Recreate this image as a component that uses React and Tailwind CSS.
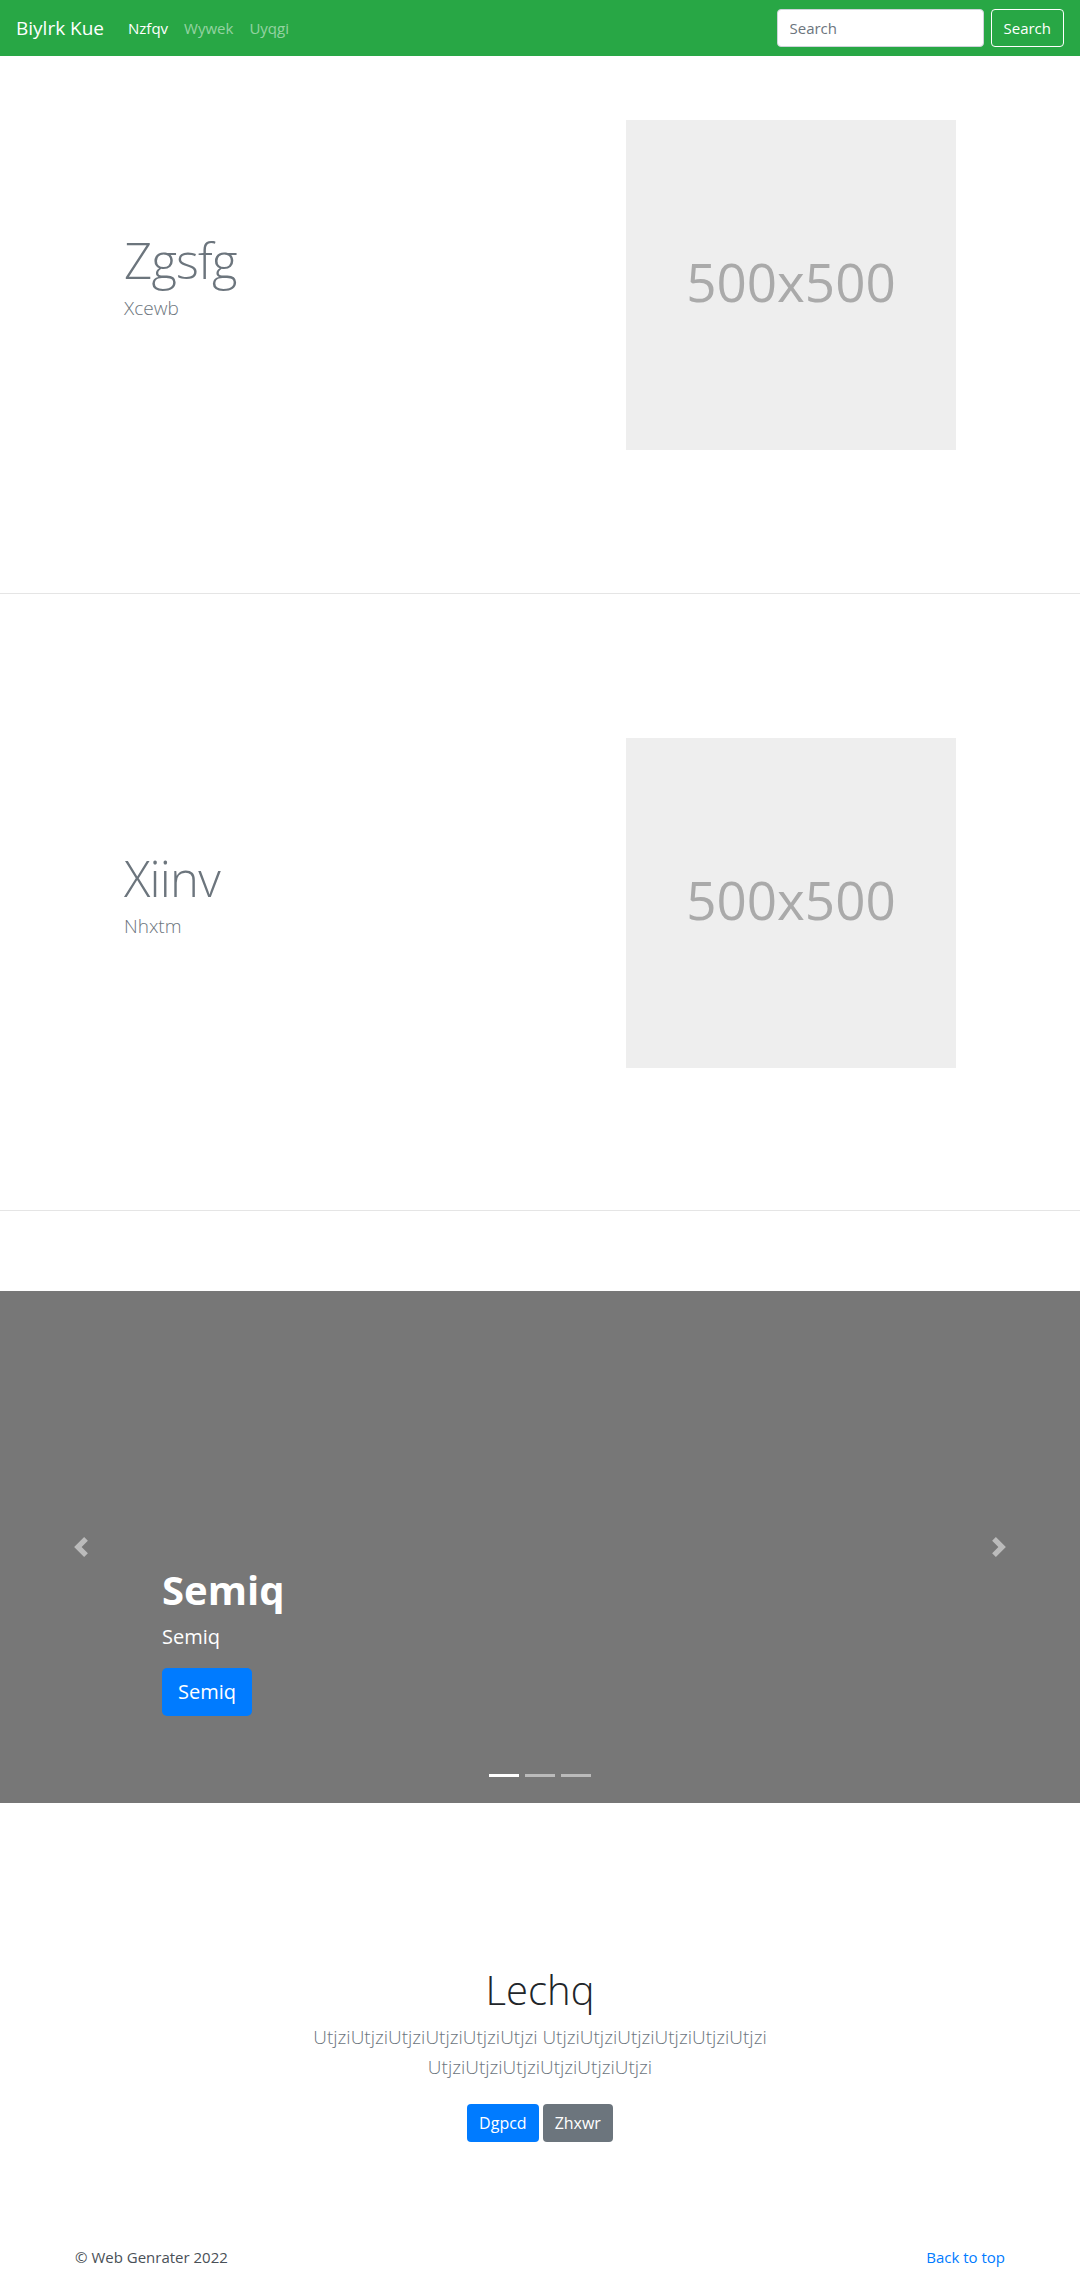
import React from "react";

const font = { fontFamily: '"Open Sans", "Liberation Sans", sans-serif' };

// 佔位圖
function Placeholder() {
  return (
    <div className="w-[330px] h-[330px] bg-[#eeeeee] flex items-center justify-center shrink-0">
      <span className="text-[53px] text-[#aaaaaa] leading-none mb-[8px]">500x500</span>
    </div>
  );
}

function Featurette({ title, sub, pt, pb }) {
  return (
    <div className={`flex items-center px-[124px] ${pt} ${pb}`}>
      <div className="flex-1 pb-[12px]">
        <h2 className="text-[49px] font-light leading-none tracking-[-0.8px] text-[#6c757d] mb-[8px]">{title}</h2>
        <p className="text-[19px] font-light leading-[30px] text-[#6c757d]">{sub}</p>
      </div>
      <Placeholder />
    </div>
  );
}

function Chevron({ flip }) {
  return (
    <svg viewBox="0 0 8 8" className={`w-5 h-5 ${flip ? "rotate-180" : ""}`} fill="#fff">
      <path d="M5.25 0l-4 4 4 4 1.5-1.5-2.5-2.5 2.5-2.5-1.5-1.5z" />
    </svg>
  );
}

export default function App() {
  return (
    <div style={font} className="bg-white text-[#212529] text-[16px]">
      {/* 導覽列 */}
      <nav className="h-[56px] bg-[#28a745] flex items-center px-4">
        <span className="text-[19px] text-white mr-4">Biylrk Kue</span>
        <div className="flex items-center text-[15px]">
          <span className="px-2 text-white">Nzfqv</span>
          <span className="px-2 text-white/50">Wywek</span>
          <span className="px-2 text-white/50">Uyqgi</span>
        </div>
        <div className="ml-auto flex items-center">
          <input
            placeholder="Search"
            className="w-[207px] h-[38px] rounded-[4px] bg-white border border-[#ced4da] px-3 text-[15px] placeholder:text-[#6c757d] mr-[7px] outline-none"
          />
          <button className="h-[38px] px-3 rounded-[4px] border border-white text-white text-[15px]">Search</button>
        </div>
      </nav>

      <Featurette title="Zgsfg" sub="Xcewb" pt="pt-[64px]" pb="pb-[143px]" />
      <hr className="border-0 border-t border-[#e5e5e5]" />
      <Featurette title="Xiinv" sub="Nhxtm" pt="pt-[144px]" pb="pb-[142px]" />
      <hr className="border-0 border-t border-[#e5e5e5]" />

      {/* 輪播 */}
      <div className="relative mt-[80px] h-[512px] bg-[#777777] flex flex-col justify-end pl-[162px] pb-[87px]">
        <h1 className="text-[40px] font-bold leading-[48px] text-white mb-[8px]">Semiq</h1>
        <p className="text-[20px] leading-[30px] text-white mb-[16px]">Semiq</p>
        <div>
          <button className="h-[48px] px-4 rounded-[5px] bg-[#007bff] text-white text-[20px]">Semiq</button>
        </div>
        <div className="absolute left-0 top-0 bottom-0 w-[162px] flex items-center justify-center opacity-50">
          <Chevron />
        </div>
        <div className="absolute right-0 top-0 bottom-0 w-[162px] flex items-center justify-center opacity-50">
          <Chevron flip />
        </div>
        <div className="absolute left-0 right-0 bottom-[26px] flex justify-center gap-[6px]">
          <span className="w-[30px] h-[3px] bg-white" />
          <span className="w-[30px] h-[3px] bg-white/50" />
          <span className="w-[30px] h-[3px] bg-white/50" />
        </div>
      </div>

      {/* 介紹區 */}
      <section className="pt-[163px] text-center">
        <div className="max-w-[640px] mx-auto">
          <h1 className="text-[40px] font-light leading-[48px] text-[#212529] mb-[8px]">Lechq</h1>
          <p className="text-[19px] font-light leading-[30px] text-[#6c757d] mb-[22px]">
            UtjziUtjziUtjziUtjziUtjziUtjzi UtjziUtjziUtjziUtjziUtjziUtjzi UtjziUtjziUtjziUtjziUtjziUtjzi
          </p>
          <div className="flex justify-center gap-[4px] my-2">
            <button className="h-[38px] px-3 rounded-[4px] bg-[#007bff] text-white">Dgpcd</button>
            <button className="h-[38px] px-3 rounded-[4px] bg-[#6c757d] text-white">Zhxwr</button>
          </div>
        </div>
      </section>

      {/* 頁尾 */}
      <footer className="w-[960px] mx-auto px-[15px] pt-[95px] pb-12 flex justify-between leading-[24px] text-[15px]">
        <span className="text-[#495057]">© Web Genrater 2022</span>
        <a className="text-[#007bff]">Back to top</a>
      </footer>
    </div>
  );
}
